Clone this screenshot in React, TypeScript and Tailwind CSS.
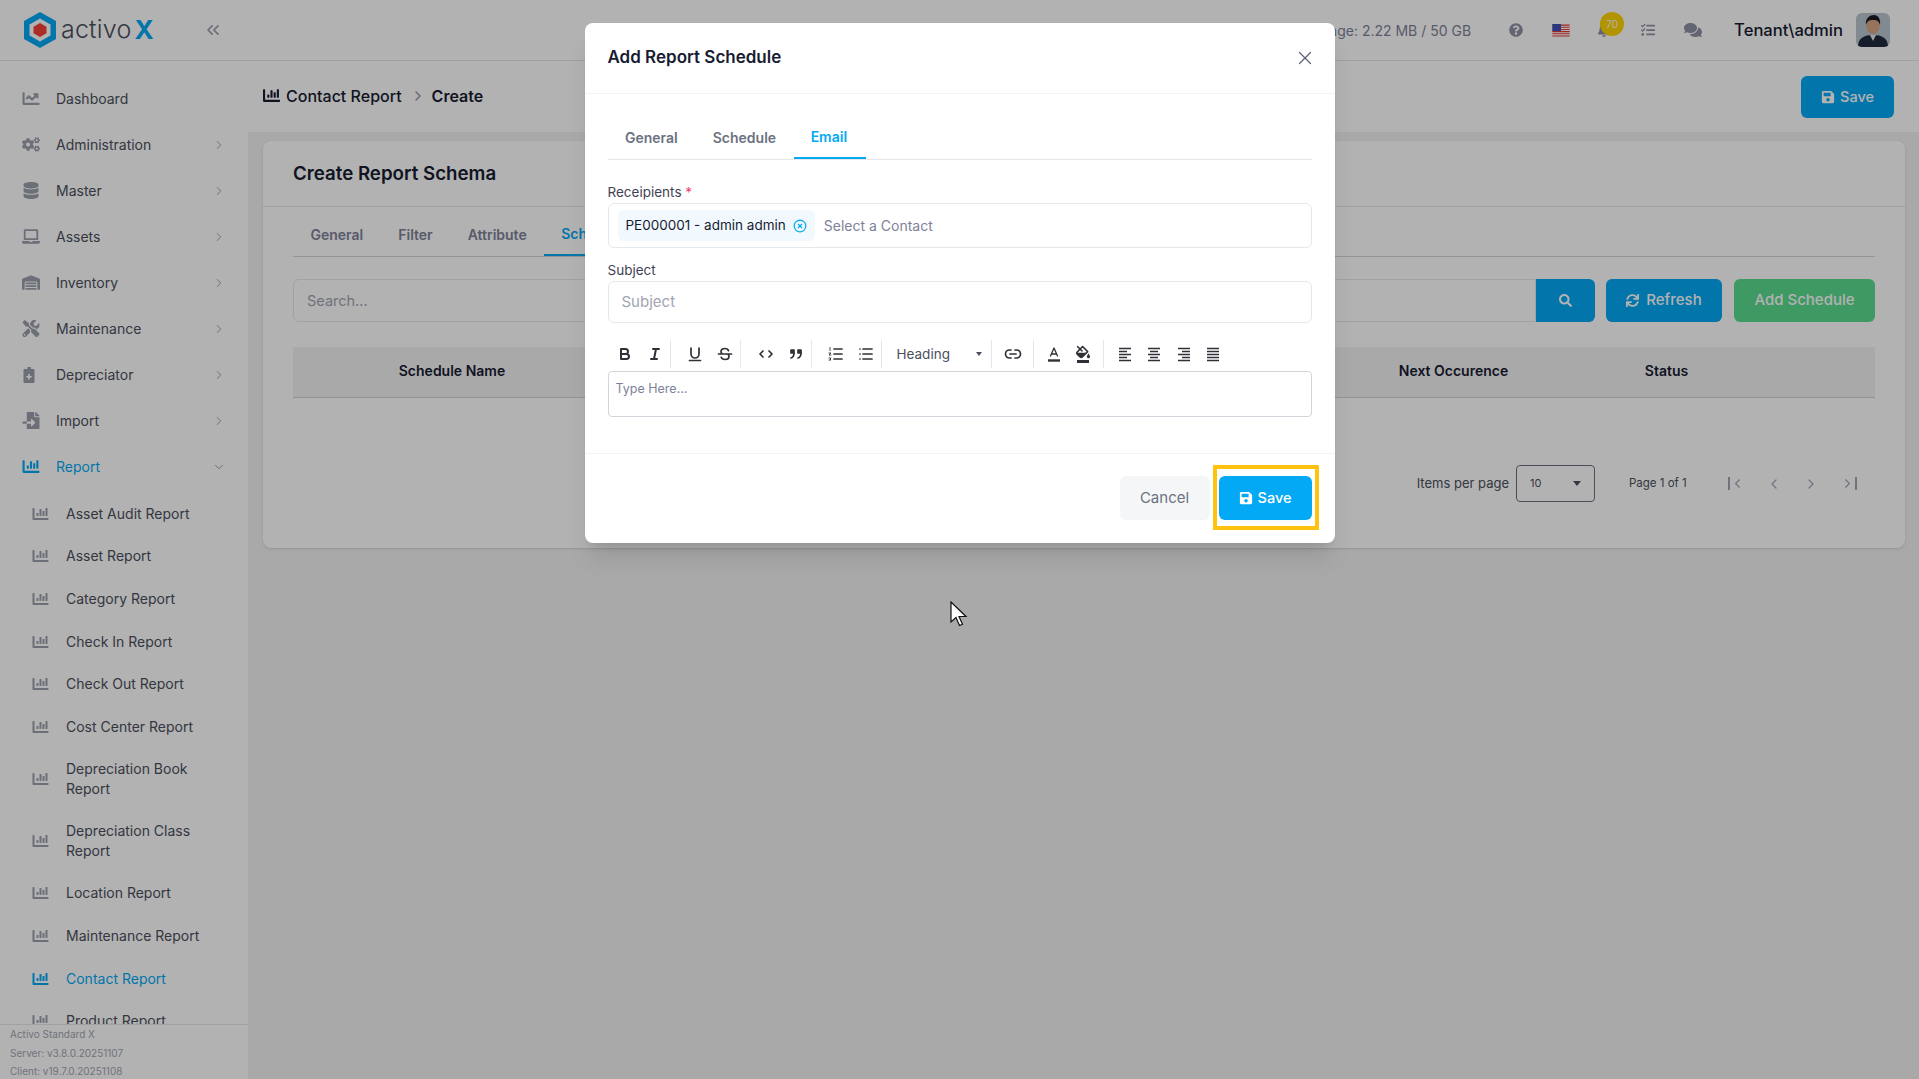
import React from 'react';
import {
  FaBell,
  FaChartBar,
  FaChartLine,
  FaCogs,
  FaComments,
  FaDatabase,
  FaFileImport,
  FaFillDrip,
  FaLaptop,
  FaQuestionCircle,
  FaSave,
  FaSearch,
  FaSync,
  FaTasks,
  FaTools,
  FaWarehouse,
} from 'react-icons/fa';
import { ChevronDown, ChevronLeft, ChevronRight, ChevronsLeft, CircleX, X } from 'lucide-react';

// the clipboard with a plus next to Depreciator, no package has this shape
const ClipboardPlus = ({ size, className }: { size?: number; className?: string }) => (
  <svg width={size} height={size} viewBox="0 0 17 17" className={className} fill="currentColor">
    <path d="M5 1h3.5v2H11a1 1 0 0 1 1 1v12a1 1 0 0 1-1 1H2a1 1 0 0 1-1-1V4a1 1 0 0 1 1-1h3zM5.6 8v2H3.8v1.6h1.8v2h1.7v-2h1.9V10H7.3V8z" fillRule="evenodd" />
  </svg>
);

const mainNav = [
  { label: 'Dashboard', icon: FaChartLine, arrow: false },
  { label: 'Administration', icon: FaCogs, arrow: true },
  { label: 'Master', icon: FaDatabase, arrow: true },
  { label: 'Assets', icon: FaLaptop, arrow: true },
  { label: 'Inventory', icon: FaWarehouse, arrow: true },
  { label: 'Maintenance', icon: FaTools, arrow: true },
  { label: 'Depreciator', icon: ClipboardPlus, arrow: true },
  { label: 'Import', icon: FaFileImport, arrow: true },
];

const reportNav = [
  'Asset Audit Report',
  'Asset Report',
  'Category Report',
  'Check In Report',
  'Check Out Report',
  'Cost Center Report',
  'Depreciation Book Report',
  'Depreciation Class Report',
  'Location Report',
  'Maintenance Report',
  'Contact Report',
  'Product Report',
];

const Logo = () => (
  <div className="flex items-center">
    <svg width="36" height="38" viewBox="0 0 36 38">
      <path d="M18 1 L34 10 V28 L18 37 L2 28 V10 Z" fill="#03a9f4" />
      <path d="M18 7.5 L28.5 13.5 V24.5 L18 30.5 L7.5 24.5 V13.5 Z" fill="#fff" />
      <path d="M18 12 L24.5 15.8 V22.2 L18 26 L11.5 22.2 V15.8 Z" fill="#f44336" />
    </svg>
    <span className="ml-[3px] text-[25px] font-light tracking-[0.2px] text-[#4b4f5c]">activo</span>
    <span className="ml-[3px] text-[26px] font-bold leading-none text-[#03a9f4]">X</span>
  </div>
);

const Sidebar = () => (
  <aside className="flex h-full w-[248px] shrink-0 flex-col bg-white text-[14px] text-[#4b4f5c]">
    <div className="flex h-[61px] shrink-0 items-center justify-between border-b border-gray-200 pl-[22px] pr-[25px]">
      <Logo />
      <ChevronsLeft size={20} className="text-[#9ca0ac]" />
    </div>
    <nav className="min-h-0 flex-1 overflow-hidden pt-[14.5px]">
      {mainNav.map(item => (
        <div key={item.label} className="flex h-[46px] items-center pl-[22px] pr-[22px]">
          <item.icon size={17} className="w-[34px] shrink-0 pr-[16px] text-[#9ca0ac]" />
          <span className="flex-1">{item.label}</span>
          {item.arrow && <ChevronRight size={14} strokeWidth={1.5} className="text-[#8e92a4]" />}
        </div>
      ))}
      <div className="flex h-[46px] items-center pl-[22px] pr-[22px] text-[#03a9f4]">
        <FaChartBar size={17} className="w-[34px] shrink-0 pr-[16px]" />
        <span className="flex-1">Report</span>
        <ChevronDown size={14} strokeWidth={1.5} className="text-[#8e92a4]" />
      </div>
      <div className="pt-[3px]">
        {reportNav.map(label => (
          <div
            key={label}
            className={`flex items-center pl-[32px] pr-[22px] leading-[20px] ${
              label.startsWith('Depreciation') ? 'h-[62px]' : 'h-[42.6px]'
            } ${label === 'Contact Report' ? 'text-[#03a9f4]' : ''}`}
          >
            <FaChartBar
              size={16}
              className={`w-[34px] shrink-0 pr-[17px] ${label === 'Contact Report' ? '' : 'text-[#9ca0ac]'}`}
            />
            <span>{label}</span>
          </div>
        ))}
      </div>
    </nav>
    <div className="h-[55px] shrink-0 border-t border-gray-200 pl-[10px] text-[10px] leading-[18.5px] text-[#a1a5b3]">
      <div>Activo Standard X</div>
      <div>Server: v3.8.0.20251107</div>
      <div>Client: v19.7.0.20251108</div>
    </div>
  </aside>
);

const Flag = () => (
  <svg width="18" height="13" viewBox="0 0 16 12">
    <rect width="16" height="12" fill="#fff" />
    <path d="M0 1h16M0 3h16M0 5h16M0 7h16M0 9h16M0 11h16" stroke="#e53935" strokeWidth="1" />
    <rect width="8" height="6.5" fill="#3f51b5" />
  </svg>
);

const Avatar = () => (
  <svg width="34" height="34" viewBox="0 0 34 34" className="rounded-md">
    <rect width="34" height="34" fill="#b9c6cf" />
    <path d="M2 34c0-9 6-12 15-12s15 3 15 12z" fill="#1f2a3d" />
    <path d="M14 22l3 6 3-6z" fill="#e8e8e8" />
    <ellipse cx="17" cy="13" rx="6.5" ry="8" fill="#d9a582" />
    <path d="M10 12c-1-7 4-10 8-10s7 4 6 10c-1-3-2-5-7-5s-6 2-7 5z" fill="#1c1c22" />
  </svg>
);

const Header = () => (
  <header className="flex h-[61px] shrink-0 items-center justify-end border-b border-gray-200 bg-white pr-[29px]">
    <span className="text-[14px] text-[#7e8299]">Storage: 2.22 MB / 50 GB</span>
    <FaQuestionCircle size={14} className="ml-[38px] text-[#8e92a4]" />
    <div className="ml-[29px]">
      <Flag />
    </div>
    <div className="relative ml-[27px]">
      <FaBell size={14} className="text-[#8e92a4]" />
      <span className="absolute -right-[13px] -top-[11px] flex h-[24px] w-[24px] items-center justify-center rounded-full bg-[#ffd500] text-[10px] text-white">
        70
      </span>
    </div>
    <FaTasks size={14} className="ml-[30px] text-[#8e92a4]" />
    <FaComments size={18} className="ml-[29px] text-[#8e92a4]" />
    <span className="ml-[32px] text-[16.6px] font-medium text-[#181c32]">Tenant\admin</span>
    <div className="ml-[13px]">
      <Avatar />
    </div>
  </header>
);

const Pagination = () => (
  <div className="mt-[67px] flex h-[37px] items-center justify-end pr-[18px] text-[13px] text-[#4b4f5c]">
    <span>Items per page</span>
    <div className="ml-[7px] flex h-[37px] w-[79px] items-center justify-between rounded border border-[#6b7280] pl-[13px] pr-[13px] text-[11px]">
      <span>10</span>
      <span className="h-0 w-0 border-x-[4.5px] border-t-[5px] border-x-transparent border-t-[#4b4f5c]" />
    </div>
    <span className="ml-[34px] w-[91px] text-[11.5px]">Page 1 of 1</span>
    <div className="ml-[8px] flex items-center gap-[21px] text-[#a1a5b3]">
      <span className="flex items-center"><span className="h-[13px] w-[2px] bg-[#a1a5b3]" /><ChevronLeft size={15} strokeWidth={1.8} /></span>
      <ChevronLeft size={16} strokeWidth={1.8} />
      <ChevronRight size={16} strokeWidth={1.8} />
      <span className="flex items-center"><ChevronRight size={15} strokeWidth={1.8} /><span className="h-[13px] w-[2px] bg-[#a1a5b3]" /></span>
    </div>
  </div>
);

const Content = () => (
  <div className="min-h-0 flex-1 bg-[#f2f2f2] pl-[15px] pr-[14px] pt-[9px]">
    <div className="rounded-lg bg-white shadow-sm">
      <div className="flex h-[66px] items-center border-b border-gray-200 pl-[30px] pt-[1px]">
        <h2 className="text-[18.7px] font-semibold text-[#181c32]">Create Report Schema</h2>
      </div>
      <div className="px-[30px]">
        <div className="flex h-[50px] items-center border-b border-gray-300 pt-[5px] text-[14px] font-semibold text-[#7e8299]">
          <span className="px-[17.5px]">General</span>
          <span className="px-[17.5px]">Filter</span>
          <span className="px-[17.5px]">Attribute</span>
          <span className="flex h-full items-center border-b-2 border-[#03a9f4] px-[17px] text-[#03a9f4]">Schedule</span>
        </div>
        <div className="mt-[22px] flex h-[43px] items-stretch text-[15px]">
          <div className="flex flex-1 items-center rounded-l-md border border-gray-200 pl-[13px] text-[14.5px] text-[#a1a5b3]">Search...</div>
          <button className="flex w-[59px] items-center justify-center rounded-r-md bg-[#03a9f4] text-white">
            <FaSearch size={13} />
          </button>
          <button className="ml-[11px] flex w-[116px] items-center justify-center gap-[7px] rounded-md bg-[#03a9f4] font-medium text-white">
            <FaSync size={13} />
            Refresh
          </button>
          <button className="ml-[12px] w-[141px] rounded-md bg-[#5adc8e] font-medium text-white">Add Schedule</button>
        </div>
        <div className="mt-[25px] grid h-[51px] grid-cols-[318px_1fr_213px_213px_102px] items-center border-b border-gray-300 bg-[#f2f2f4] pb-[4px] text-center text-[14px] font-semibold text-[#181c32]">
          <span>Schedule Name</span>
          <span />
          <span>Next Occurence</span>
          <span>Status</span>
          <span />
        </div>
        <Pagination />
        <div className="h-[46px]" />
      </div>
    </div>
  </div>
);

const QuillIcon = ({ children }: { children: React.ReactNode }) => (
  <svg width="18" height="18" viewBox="0 0 18 18" fill="none" stroke="#2f3136" strokeWidth="1.7" strokeLinecap="round" strokeLinejoin="round">
    {children}
  </svg>
);

const Sep = () => <span className="h-[28px] w-px bg-gray-200" />;

const Tool = ({ children }: { children: React.ReactNode }) => (
  <span className="flex w-[29.5px] justify-center">{children}</span>
);

const Toolbar = () => (
  <div className="flex h-[34px] items-center pl-[3px]">
    <Tool>
      <QuillIcon>
        <path d="M5 4h4.5a2.5 2.5 0 0 1 0 5H5zM5 9h5.5a2.5 2.5 0 0 1 0 5H5z" strokeWidth="2" />
      </QuillIcon>
    </Tool>
    <Tool>
      <QuillIcon>
        <path d="M7 4h6M5 14h6M8 14l2-10" strokeWidth="2" />
      </QuillIcon>
    </Tool>
    <Sep />
    <span className="w-[10px]" />
    <Tool>
      <QuillIcon>
        <path d="M5 3v6a4 4 0 0 0 8 0V3M3.5 15.5h11" />
      </QuillIcon>
    </Tool>
    <Tool>
      <QuillIcon>
        <path d="M15.5 9h-13M12.5 5.7C12 4.2 10.5 3.5 9 3.5c-2.2 0-4 1-4 3 0 .9.4 1.6 1 2.1M5.2 12.3C5.8 13.8 7.4 14.5 9 14.5c2.2 0 4-1 4-3 0-.9-.3-1.8-1-2.3" />
      </QuillIcon>
    </Tool>
    <Sep />
    <span className="w-[11px]" />
    <Tool>
      <QuillIcon>
        <path d="M6 6L3 9l3 3M12 6l3 3-3 3" />
      </QuillIcon>
    </Tool>
    <Tool>
      <QuillIcon>
        <rect x="4" y="5" width="3" height="3" fill="#2f3136" />
        <rect x="11" y="5" width="3" height="3" fill="#2f3136" />
        <path d="M7 8c0 4-3 5-3 5M14 8c0 4-3 5-3 5" />
      </QuillIcon>
    </Tool>
    <Sep />
    <span className="w-[10px]" />
    <Tool>
      <QuillIcon>
        <path d="M7 4h8M7 9h8M7 14h8" />
        <path d="M3 2.5v3M2 8h2l-2 2h2M2 13h2l-1 1 1 1H2" strokeWidth="0.9" />
      </QuillIcon>
    </Tool>
    <Tool>
      <QuillIcon>
        <path d="M6 4h9M6 9h9M6 14h9M3 4h.01M3 9h.01M3 14h.01" />
      </QuillIcon>
    </Tool>
    <Sep />
    <div className="flex w-[109px] items-center justify-between pl-[15px] pr-[9px] text-[13.5px] text-[#4b4f5c]">
      <span>Heading</span>
      <span className="h-0 w-0 border-x-[3px] border-t-[4px] border-x-transparent border-t-[#4b4f5c]" />
    </div>
    <Sep />
    <span className="w-[7px]" />
    <Tool>
      <QuillIcon>
        <path d="M7 5H5.5a4 4 0 0 0 0 8H7M11 5h1.5a4 4 0 0 1 0 8H11M6 9h6" />
      </QuillIcon>
    </Tool>
    <span className="w-[5px]" />
    <Sep />
    <span className="w-[5px]" />
    <Tool>
      <QuillIcon>
        <path d="M5.5 11L9 3l3.5 8M11.6 9H6.4" strokeWidth="1.3" />
        <path d="M3 15.5h12" strokeWidth="2.4" strokeLinecap="butt" />
      </QuillIcon>
    </Tool>
    <span className="flex w-[29.5px] flex-col items-center">
      <FaFillDrip size={14} className="text-[#2f3136]" />
      <span className="mt-[1px] h-[2.5px] w-[12px] bg-[#2f3136]" />
    </span>
    <span className="w-[5px]" />
    <Sep />
    <span className="w-[6px]" />
    {['M3 3.5h12M3 6.5h8M3 9.5h12M3 12.5h8M3 15.5h12', 'M3 3.5h12M5 6.5h8M3 9.5h12M5 12.5h8M3 15.5h12', 'M3 3.5h12M7 6.5h8M3 9.5h12M7 12.5h8M3 15.5h12', 'M3 3.5h12M3 6.5h12M3 9.5h12M3 12.5h12M3 15.5h12'].map(d => (
      <Tool key={d}>
        <QuillIcon>
          <path d={d} strokeWidth="1.4" strokeLinecap="butt" />
        </QuillIcon>
      </Tool>
    ))}
  </div>
);

const ScheduleModal = () => (
  <div className="relative h-[520px] w-[750px] rounded-lg bg-white shadow-xl">
    <div className="flex h-[71px] items-center justify-between border-b border-gray-100 pl-[23px] pr-[19px]">
      <h3 className="text-[17px] font-semibold text-[#181c32]">Add Report Schedule</h3>
      <X size={22} strokeWidth={1.3} className="text-[#5e6278]" />
    </div>
    <div className="px-[23px]">
      <div className="mt-[18px] flex h-[48px] items-center border-b border-gray-200 pt-[4px] text-[14px] font-semibold text-[#6b7280]">
        <span className="px-[17.5px]">General</span>
        <span className="px-[17.5px]">Schedule</span>
        <span className="flex h-full items-center border-b-2 border-[#03a9f4] pl-[17px] pr-[19px] text-[#03a9f4]">Email</span>
      </div>
      <div className="mt-[22px] text-[13.5px] leading-[20px] text-[#3f4254]">
        Receipients <span className="text-[#f1416c]">*</span>
      </div>
      <div className="mt-[1px] flex h-[45px] items-center rounded-md border border-gray-200 pl-[9px] text-[13.5px]">
        <span className="flex h-[31px] items-center gap-[7px] rounded-md bg-[#f1f8fe] pl-[8px] pr-[8px] text-[#181c32]">
          PE000001 - admin admin
          <CircleX size={14} className="text-[#03a9f4]" />
        </span>
        <span className="ml-[9px] text-[14px] text-[#7e8299]">Select a Contact</span>
      </div>
      <div className="mt-[12px] text-[13.5px] leading-[20px] text-[#3f4254]">Subject</div>
      <div className="mt-[1px] flex h-[42px] items-center rounded-md border border-gray-200 pl-[13px] text-[15px] text-[#a1a5b3]">Subject</div>
      <div className="mt-[14px]">
        <Toolbar />
      </div>
      <div className="h-[46px] rounded border border-gray-300 pl-[7px] pt-[8px] text-[12.5px] text-[#7e8299]">Type Here...</div>
    </div>
    <div className="mt-[36px] flex h-[90px] items-start justify-end gap-[9px] border-t border-gray-100 pr-[23px] pt-[22px] text-[14.5px]">
      <button className="h-[44px] w-[90px] rounded-md bg-[#f5f6f8] text-[15px] text-[#6b7280]">Cancel</button>
      <button className="flex h-[44px] w-[93px] items-center justify-center gap-[5px] rounded-md bg-[#03a9f4] font-medium text-white">
        <FaSave size={14} />
        Save
      </button>
    </div>
    {/* highlight drawn over the save button */}
    <div className="absolute left-[628px] top-[442px] h-[65px] w-[106px] border-[4px] border-[#ffc30f]" />
  </div>
);

const App: React.FC = () => {
  return (
    <div className="relative flex h-screen w-screen overflow-hidden font-[Inter,sans-serif]">
      <Sidebar />
      <main className="flex min-w-0 flex-1 flex-col">
        <Header />
        <div className="flex h-[71px] shrink-0 items-center justify-between bg-white pl-[15px] pr-[25px]">
          <div className="flex items-center pb-[2px] text-[16px] text-[#181c32]">
            <FaChartBar size={17} />
            <span className="ml-[6px] font-medium">Contact Report</span>
            <ChevronRight size={16} className="ml-[8px] text-[#8e92a4]" />
            <span className="ml-[6px] font-semibold">Create</span>
          </div>
          <button className="flex h-[42px] w-[93px] items-center justify-center gap-[5px] rounded-md bg-[#03a9f4] text-[14.5px] font-medium text-white">
            <FaSave size={14} />
            Save
          </button>
        </div>
        <Content />
      </main>
      <div className="absolute inset-0 flex items-start justify-center bg-black/30 pt-[23px]">
        <ScheduleModal />
      </div>
      {/* mouse pointer captured in the recording */}
      <svg className="absolute left-[950px] top-[601px]" width="18" height="26" viewBox="0 0 18 26">
        <path d="M1 1v20l5-4.5 3.5 8 3-1.3-3.5-7.7h7z" fill="#fff" stroke="#111" strokeWidth="1.2" />
      </svg>
    </div>
  );
};

export default App;
